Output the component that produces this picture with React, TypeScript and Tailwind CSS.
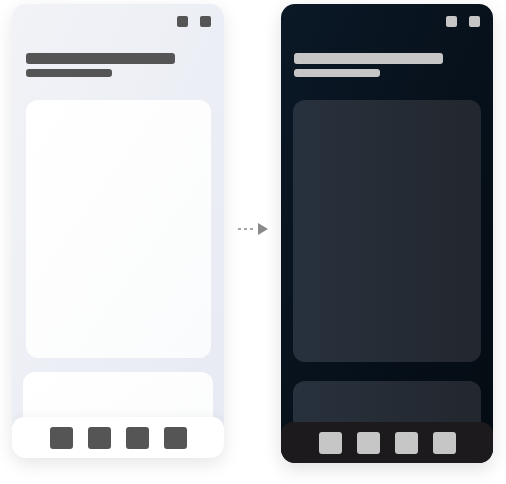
import React from "react";

type PhoneProps = {
  dark?: boolean;
};

const Phone = ({ dark }: PhoneProps) => {
  const ink = dark ? "bg-[#c6c6c6]" : "bg-[#555555]";

  return (
    <div
      className={`relative flex flex-col overflow-hidden rounded-[14px] w-[212px] ${
        dark
          ? "h-[459px] bg-gradient-to-br from-[#0b1826] to-[#040b12] shadow-[0_6px_18px_rgba(0,0,0,0.12)]"
          : "h-[454px] bg-gradient-to-br from-[#f1f3f7] to-[#e7eaf3] shadow-[0_6px_18px_rgba(0,0,0,0.10)]"
      }`}
    >
      {/* window buttons */}
      <div className="flex justify-end gap-3 pt-3 pr-[13px]">
        <div className={`w-[11px] h-[11px] rounded-[2px] ${ink}`} />
        <div className={`w-[11px] h-[11px] rounded-[2px] ${ink}`} />
      </div>

      {/* heading */}
      <div className={`flex flex-col gap-[5px] mt-[26px] ${dark ? "pl-[13px]" : "pl-[14px]"}`}>
        <div className={`h-[11px] w-[149px] rounded-[3px] ${ink}`} />
        <div className={`h-[8px] w-[86px] rounded-[3px] ${ink}`} />
      </div>

      {/* cards */}
      <div className={`flex flex-col mt-[23px] ${dark ? "px-3 gap-[19px]" : "pl-[14px] pr-[13px] gap-[14px]"}`}>
        <div
          className={`rounded-[12px] ${
            dark
              ? "h-[262px] bg-gradient-to-r from-[#27313d] to-[#23272e]"
              : "h-[258px] bg-gradient-to-br from-[#ffffff] to-[#fafbfc]"
          }`}
        />
        <div
          className={`rounded-[12px] h-[120px] ${
            dark
              ? "bg-gradient-to-r from-[#27313d] to-[#23272e]"
              : "-ml-[3px] -mr-[2px] bg-gradient-to-br from-[#ffffff] to-[#fafbfc]"
          }`}
        />
      </div>

      {/* tab bar */}
      <div
        className={`absolute bottom-0 left-0 right-0 h-[41px] rounded-[12px] flex items-center justify-center gap-[15px] ${
          dark ? "bg-[#1c1a1d]" : "bg-white shadow-[0_-2px_8px_rgba(0,0,0,0.04)]"
        }`}
      >
        {[0, 1, 2, 3].map((i) => (
          <div key={i} className={`w-[23px] h-[22px] rounded-[3px] ${ink}`} />
        ))}
      </div>
    </div>
  );
};

const Arrow = () => (
  <div className="flex items-center justify-center w-[57px] mt-[218px]">
    <svg width="32" height="14" viewBox="0 0 32 14">
      <line x1="1" y1="7" x2="19" y2="7" stroke="#8a8a8a" strokeWidth="1.5" strokeDasharray="3 3" />
      <polygon points="21,1 31,7 21,13" fill="#8a8a8a" />
    </svg>
  </div>
);

export default function App() {
  return (
    <div className="w-[506px] h-[484px] bg-white flex items-start pl-3 pt-1">
      <Phone />
      <Arrow />
      <Phone dark />
    </div>
  );
}
